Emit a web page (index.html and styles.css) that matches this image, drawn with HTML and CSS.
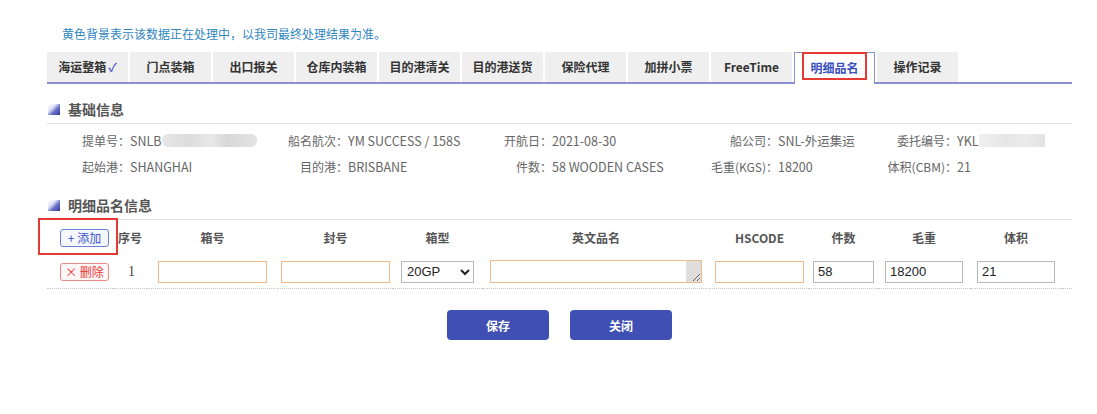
FILE: index.html
```html
<!DOCTYPE html>
<html lang="zh-CN">
<head>
<meta charset="utf-8">
<title>明细品名</title>
<link rel="stylesheet" href="styles.css">
</head>
<body>
<div class="page">
  <p class="notice">黄色背景表示该数据正在处理中，以我司最终处理结果为准。</p>

  <ul class="tabs">
    <li class="tab">海运整箱<span class="check">✓</span></li>
    <li class="tab">门点装箱</li>
    <li class="tab">出口报关</li>
    <li class="tab">仓库内装箱</li>
    <li class="tab">目的港清关</li>
    <li class="tab">目的港送货</li>
    <li class="tab">保险代理</li>
    <li class="tab">加拼小票</li>
    <li class="tab">FreeTime</li>
    <li class="tab active"><span class="mark-tab"></span>明细品名</li>
    <li class="tab">操作记录</li>
  </ul>

  <h3 class="sec-head"><span class="sec-icon"></span>基础信息</h3>
  <div class="info">
    <span class="lab">提单号：</span><span class="val">SNLB<span class="blur b1"></span></span>
    <span class="lab">船名航次：</span><span class="val">YM SUCCESS / 158S</span>
    <span class="lab">开航日：</span><span class="val">2021-08-30</span>
    <span class="lab">船公司：</span><span class="val">SNL-外运集运</span>
    <span class="lab">委托编号：</span><span class="val">YKL<span class="blur b2"></span></span>

    <span class="lab">起始港：</span><span class="val">SHANGHAI</span>
    <span class="lab">目的港：</span><span class="val">BRISBANE</span>
    <span class="lab">件数：</span><span class="val">58 WOODEN CASES</span>
    <span class="lab">毛重(KGS)：</span><span class="val">18200</span>
    <span class="lab">体积(CBM)：</span><span class="val">21</span>
  </div>

  <h3 class="sec-head sec2"><span class="sec-icon"></span>明细品名信息</h3>
  <div class="detail">
    <div class="cell head first"><span class="btn-add">+ 添加</span><span class="mark-add"></span></div>
    <div class="cell head">序号</div>
    <div class="cell head">箱号</div>
    <div class="cell head">封号</div>
    <div class="cell head">箱型</div>
    <div class="cell head">英文品名</div>
    <div class="cell head">HSCODE</div>
    <div class="cell head">件数</div>
    <div class="cell head">毛重</div>
    <div class="cell head">体积</div>
    <div class="cell head"></div>

    <div class="cell row first"><span class="btn-del">× 删除</span></div>
    <div class="cell row num">1</div>
    <div class="cell row"><input class="inp warn w109" type="text"></div>
    <div class="cell row"><input class="inp warn w109" type="text"></div>
    <div class="cell row"><select class="sel"><option>20GP</option></select></div>
    <div class="cell row"><textarea class="ta"></textarea></div>
    <div class="cell row"><input class="inp warn w89" type="text"></div>
    <div class="cell row"><input class="inp w61" type="text" value="58"></div>
    <div class="cell row"><input class="inp w78" type="text" value="18200"></div>
    <div class="cell row"><input class="inp w78" type="text" value="21"></div>
    <div class="cell row"></div>
  </div>

  <div class="actions">
    <button class="btn">保存</button>
    <button class="btn">关闭</button>
  </div>
</div>
</body>
</html>
```
FILE: styles.css
```css
* { box-sizing: border-box; }
body {
  margin: 0;
  background: #fff;
  font-family: "Noto Sans CJK SC", "Noto Sans", sans-serif;
  color: #333;
}
.page {
  width: 1025px;
  margin-left: 47px;
  padding-top: 26px;
}
.notice {
  margin: 0 0 10px 0;
  padding-left: 15px;
  font-size: 12px;
  line-height: 16px;
  color: #2f86c0;
}
.tabs {
  list-style: none;
  margin: 0;
  padding: 0;
  display: flex;
  align-items: flex-end;
  border-bottom: 2px solid #8a90d2;
  height: 32px;
}
.tab {
  position: relative;
  width: 81px;
  height: 30px;
  margin-right: 2px;
  background: #efefef;
  font-size: 12px;
  font-weight: bold;
  line-height: 30px;
  text-align: center;
  color: #333;
}
.tab .check {
  color: #5a62c8;
  margin-left: 2px;
  font-weight: bold;
}
.tab.active {
  height: 32px;
  margin-bottom: -2px;
  background: #fff;
  border: 1px solid #8a90d2;
  border-bottom: 0;
  color: #3b4fc0;
  line-height: 29px;
}
.mark-tab {
  position: absolute;
  left: 7px;
  top: -1px;
  width: 65px;
  height: 28px;
  border: 2px solid #e53935;
}
.sec-head {
  margin: 15px 0 0 0;
  padding: 0 0 4px 1px;
  border-bottom: 1px solid #e3e3e3;
  font-size: 14px;
  line-height: 20px;
  font-weight: bold;
  color: #555;
  display: flex;
  align-items: center;
}
.sec2 { margin-top: 16px; }
.sec-icon {
  width: 12px;
  height: 11px;
  margin-right: 8px;
  background: linear-gradient(135deg, #ffffff 0%, #dfe2f6 35%, #6a72c8 60%, #2f3a9c 100%);
}
.info {
  margin-top: 3px;
  display: grid;
  grid-template-columns: 83px 158px 60px 132px 72px 148px 78px 107px 72px 115px;
  grid-auto-rows: 26px;
  font-size: 12px;
  color: #666;
  align-items: center;
}
.lab { text-align: right; white-space: nowrap; }
.val { white-space: nowrap; display: flex; align-items: center; font-size: 12.5px; }
.blur {
  display: inline-block;
  height: 13px;
  border-radius: 6px;
}
.b1 {
  width: 95px;
  margin-left: 0;
  background: linear-gradient(90deg, #e6e6e6 0%, #dcdcdc 30%, #e8e8e8 50%, #d8d8d8 70%, #e4e4e4 100%);
}
.b2 {
  width: 66px;
  margin-left: 0;
  border-radius: 0;
  background: linear-gradient(90deg, #f0f0f0 0%, #e6e6e6 40%, #ebebeb 70%, #e2e2e2 100%);
}
.detail {
  display: grid;
  grid-template-columns: 66px 34px 131px 115px 89px 228px 99px 69px 92px 92px 10px;
  grid-template-rows: 35px 34px;
}
.cell {
  display: flex;
  align-items: center;
  justify-content: center;
}
.cell.head {
  font-size: 12px;
  font-weight: bold;
  color: #555;
}
.cell.row {
  border-bottom: 1px dotted #c8c8c8;
}
.cell.first {
  justify-content: flex-start;
  padding-left: 13px;
  position: relative;
}
.btn-add, .btn-del {
  display: inline-flex;
  align-items: center;
  justify-content: center;
  width: 49px;
  height: 18px;
  border-radius: 3px;
  font-size: 12px;
  font-weight: normal;
  line-height: 16px;
}
.btn-add {
  border: 1px solid #6d80d6;
  color: #3a56cf;
  background: #f5f7ff;
}
.btn-del {
  border: 1px solid #ec8a8a;
  color: #e53935;
  background: #fff6f6;
}
.mark-add {
  position: absolute;
  left: -9px;
  top: -2px;
  width: 80px;
  height: 37px;
  border: 2px solid #e53935;
}
.num {
  font-family: "Liberation Serif", serif;
  font-size: 14px;
  color: #444;
  justify-content: flex-start !important;
  padding-left: 15px;
}
.inp {
  height: 22px;
  border: 1px solid #b8b8b8;
  padding: 1px 4px;
  font-family: "Liberation Sans", Arial, sans-serif;
  font-size: 13px;
  color: #222;
  background: #fff;
  outline: none;
}
.inp.warn { border-color: #f2b888; }
.w109 { width: 109px; }
.w89 { width: 89px; }
.w61 { width: 61px; }
.w78 { width: 78px; }
.sel {
  width: 73px;
  height: 22px;
  border: 1px solid #b8b8b8;
  font-family: "Liberation Sans", Arial, sans-serif;
  font-size: 13px;
  color: #222;
  background: #fff;
  padding-left: 1px;
}
.ta {
  width: 212px;
  height: 23px;
  border: 1px solid #f2b888;
  padding: 1px 4px;
  resize: both;
  overflow: hidden;
  font-size: 13px;
  outline: none;
  background: linear-gradient(to left, #dedede 0, #dedede 15px, #fff 15px);
}
.actions {
  margin-top: 21px;
  display: flex;
  justify-content: center;
  gap: 21px;
}
.btn {
  width: 102px;
  height: 30px;
  border: 0;
  border-radius: 4px;
  background: #3f4fb3;
  color: #fff;
  font-family: "Noto Sans CJK SC", sans-serif;
  font-size: 12px;
  font-weight: bold;
}
```
